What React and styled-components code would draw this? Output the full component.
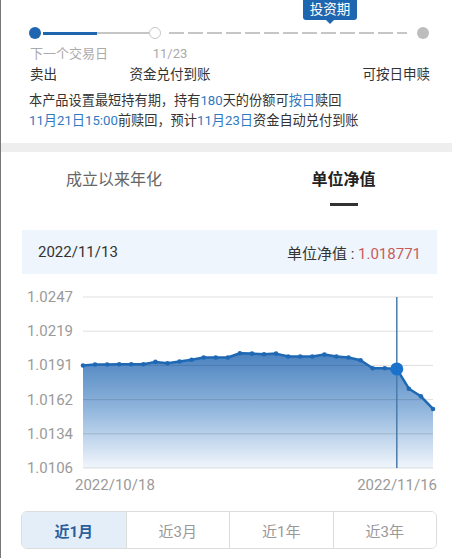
import React, { useState } from 'react';
import styled, { createGlobalStyle } from 'styled-components';

const GlobalStyle = createGlobalStyle`
  html, body {
    margin: 0;
    padding: 0;
    background: #fff;
  }
  body {
    font-family: Roboto, "Noto Sans CJK SC", "Noto Sans", sans-serif;
    color: #333;
  }
`;

const Page = styled.div`
  width: 452px;
  height: 558px;
  overflow: hidden;
  background: #fff;
  border-left: 1px solid #777;
  box-sizing: border-box;
`;

// top timeline
const Top = styled.div`
  position: relative;
  padding: 27px 0 13px 0;
`;

const Badge = styled.div`
  position: absolute;
  left: 302px;
  top: 0;
  width: 54px;
  height: 20px;
  background: #1f66b0;
  color: #fff;
  font-size: 13.5px;
  line-height: 19px;
  text-align: center;
  border-radius: 0 0 3px 3px;
  &::after {
    content: '';
    position: absolute;
    left: 50%;
    bottom: -4px;
    margin-left: -4px;
    border-left: 4px solid transparent;
    border-right: 4px solid transparent;
    border-top: 4px solid #1f66b0;
  }
`;

const Track = styled.div`
  display: flex;
  align-items: center;
  height: 12px;
  padding: 0 23px 0 28px;
`;

const Dot = styled.div`
  flex: none;
  width: 12px;
  height: 12px;
  border-radius: 50%;
  box-sizing: border-box;
  background: ${p => (p.hollow ? '#fff' : p.color)};
  border: ${p => (p.hollow ? '1px solid #c8c8c8' : 'none')};
`;

const Seg = styled.div`
  flex: ${p => (p.grow ? 1 : 'none')};
  width: ${p => (p.w ? `${p.w}px` : 'auto')};
  height: ${p => p.h || 2}px;
  margin: ${p => p.m || '0'};
  background: ${p =>
    p.dashed
      ? 'repeating-linear-gradient(90deg, #c6c6c6 0 15px, transparent 15px 19px)'
      : p.color};
`;

const Labels = styled.div`
  display: grid;
  grid-template-columns: 90px 100px 1fr;
  padding: 5px 22px 0 29px;
  font-size: 13.5px;
  line-height: 20px;
`;

const Label = styled.div`
  color: ${p => (p.muted ? '#aaa' : '#333')};
  font-size: ${p => (p.muted ? '13px' : '13.5px')};
  text-align: ${p => p.align || 'left'};
  white-space: nowrap;
`;

const Desc = styled.div`
  padding: 7px 0 0 28px;
  font-size: 13.2px;
  line-height: 19.5px;
  color: #333;
`;

const Hl = styled.span`
  color: #2f7ac0;
`;

const Band = styled.div`
  height: 9px;
  background: #eeeeee;
`;

// tabs
const Tabs = styled.div`
  display: grid;
  grid-template-columns: 226px 1fr;
  padding-top: 17px;
`;

const Tab = styled.div`
  display: flex;
  flex-direction: column;
  align-items: center;
  font-size: 16px;
  line-height: 22px;
  color: ${p => (p.active ? '#222' : '#666')};
  font-weight: ${p => (p.active ? 700 : 400)};
  padding-left: ${p => (p.active ? '8px' : '0')};
  cursor: pointer;
  &::after {
    content: '';
    width: 28px;
    height: 3px;
    margin-top: 12px;
    background: ${p => (p.active ? '#333' : 'transparent')};
  }
`;

const Info = styled.div`
  margin: 24px 15px 0 21px;
  height: 44px;
  background: #eef5fc;
  display: flex;
  align-items: center;
  justify-content: space-between;
  padding: 0 16px;
  font-size: 15px;
  color: #333;
`;

const Red = styled.span`
  color: #c85b5b;
`;

const ChartSvg = styled.svg`
  display: block;
  width: 452px;
  height: 232px;
  font-family: Roboto, "Noto Sans", sans-serif;
`;

const Segmented = styled.div`
  display: grid;
  grid-template-columns: repeat(4, 1fr);
  margin: 5px 15px 0 20px;
  height: 38px;
  border: 1px solid #dcdcdc;
  border-radius: 6px;
  overflow: hidden;
  box-sizing: border-box;
`;

const SegBtn = styled.div`
  display: flex;
  align-items: center;
  justify-content: center;
  font-size: 15px;
  color: ${p => (p.active ? '#2a5e9c' : '#999')};
  font-weight: ${p => (p.active ? 700 : 400)};
  background: ${p => (p.active ? '#e4eef9' : '#fff')};
  border-left: ${p => (p.first ? 'none' : '1px solid #dcdcdc')};
  cursor: pointer;
`;

const data = [
  1.01905, 1.01913, 1.01913, 1.01916, 1.01916, 1.01916, 1.01935, 1.01924,
  1.01938, 1.01952, 1.01971, 1.01971, 1.01971, 1.02006, 1.02003, 1.01998,
  1.02003, 1.01979, 1.01979, 1.01979, 1.01995, 1.01979, 1.01971, 1.01948,
  1.01883, 1.01883, 1.01877, 1.01714, 1.01651, 1.01547,
];
const ticks = ['1.0247', '1.0219', '1.0191', '1.0162', '1.0134', '1.0106'];

const X0 = 82;
const X1 = 432;
const Y0 = 23;
const Y1 = 194;
const VMAX = 1.0247;
const VMIN = 1.0106;
const px = i => X0 + ((X1 - X0) * i) / (data.length - 1);
const py = v => Y0 + ((VMAX - v) / (VMAX - VMIN)) * (Y1 - Y0);

const Chart = ({ selected }) => {
  const pts = data.map((v, i) => [px(i), py(v)]);
  const line = pts.map(([x, y], i) => `${i ? 'L' : 'M'}${x.toFixed(1)},${y.toFixed(1)}`).join(' ');
  const area = `${line} L${X1},${Y1} L${X0},${Y1} Z`;
  const step = (Y1 - Y0) / (ticks.length - 1);
  return (
    <ChartSvg viewBox="0 0 452 232">
      <defs>
        <linearGradient id="fillGrad" x1="0" y1="0" x2="0" y2="1">
          <stop offset="0" stopColor="#4a82c0" />
          <stop offset="0.5" stopColor="#93b7dd" />
          <stop offset="1" stopColor="#f1f6fc" />
        </linearGradient>
      </defs>
      <path d={area} fill="url(#fillGrad)" />
      {ticks.map((t, i) => (
        <g key={t}>
          <line x1={X0} x2={X1} y1={Y0 + i * step} y2={Y0 + i * step} stroke="rgba(0,0,0,0.13)" strokeWidth="1" />
          <text x="72" y={Y0 + i * step} textAnchor="end" dominantBaseline="central" fontSize="15" fill="#9a9a9a">
            {t}
          </text>
        </g>
      ))}
      <line x1={px(selected)} x2={px(selected)} y1={Y0} y2={Y1} stroke="#4a7cab" strokeWidth="1.5" />
      <path d={line} fill="none" stroke="#1f68b4" strokeWidth="2.5" strokeLinejoin="round" />
      {pts.map(([x, y], i) => (
        <circle key={i} cx={x} cy={y} r="2.3" fill="#1f68b4" />
      ))}
      <circle cx={pts[selected][0]} cy={pts[selected][1]} r="6.5" fill="#1a72cc" />
      <text x="74" y="211" dominantBaseline="central" fontSize="15" fill="#9a9a9a">2022/10/18</text>
      <text x="436" y="211" textAnchor="end" dominantBaseline="central" fontSize="15" fill="#9a9a9a">2022/11/16</text>
    </ChartSvg>
  );
};

const ranges = ['近1月', '近3月', '近1年', '近3年'];

export default function App() {
  const [tab, setTab] = useState(1);
  const [range, setRange] = useState(0);
  return (
    <Page>
      <GlobalStyle />
      <Top>
        <Badge>投资期</Badge>
        <Track>
          <Dot color="#1f66b0" />
          <Seg w={54} h={3} m="0 0 0 2px" color="#1f66b0" />
          <Seg w={52} h={2} color="#c6c6c6" />
          <Dot hollow />
          <Seg grow dashed h={2} m="0 10px 0 8px" />
          <Dot color="#bdbdbd" />
        </Track>
        <Labels>
          <Label muted>下一个交易日</Label>
          <Label muted align="center">11/23</Label>
          <div />
          <Label>卖出</Label>
          <Label align="center">资金兑付到账</Label>
          <Label align="right">可按日申赎</Label>
        </Labels>
        <Desc>
          <div>本产品设置最短持有期，持有<Hl>180</Hl>天的份额可<Hl>按日</Hl>赎回</div>
          <div><Hl>11月21日15:00</Hl>前赎回，预计<Hl>11月23日</Hl>资金自动兑付到账</div>
        </Desc>
      </Top>
      <Band />
      <Tabs>
        <Tab active={tab === 0} onClick={() => setTab(0)}>成立以来年化</Tab>
        <Tab active={tab === 1} onClick={() => setTab(1)}>单位净值</Tab>
      </Tabs>
      <Info>
        <span>2022/11/13</span>
        <span>单位净值 : <Red>1.018771</Red></span>
      </Info>
      <Chart selected={26} />
      <Segmented>
        {ranges.map((r, i) => (
          <SegBtn key={r} first={i === 0} active={range === i} onClick={() => setRange(i)}>
            {r}
          </SegBtn>
        ))}
      </Segmented>
    </Page>
  );
}
